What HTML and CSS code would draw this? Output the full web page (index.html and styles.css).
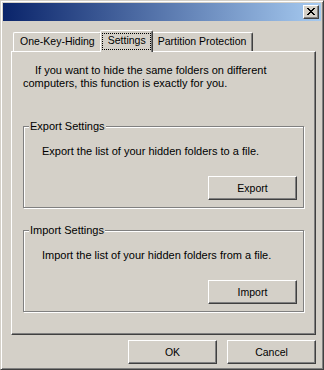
FILE: index.html
```html
<!DOCTYPE html>
<html>
<head>
    <title>Settings</title>
    <link rel="stylesheet" href="styles.css">
</head>
<body>
    <div class="window">
        <div class="titlebar">
            <button class="close-btn">
                <svg width="8" height="7" viewBox="0 0 8 7" shape-rendering="crispEdges">
                    <path d="M0 0h2v1H0zM6 0h2v1H6zM1 1h2v1H1zM5 1h2v1H5zM2 2h4v1H2zM3 3h2v1H3zM2 4h4v1H2zM1 5h2v1H1zM5 5h2v1H5zM0 6h2v1H0zM6 6h2v1H6z" fill="#000"/>
                </svg>
            </button>
        </div>

        <div class="body">
            <div class="tabs">
                <div class="tab">One-Key-Hiding</div>
                <div class="tab active"><span class="focus">Settings</span></div>
                <div class="tab">Partition Protection</div>
            </div>

            <div class="panel">
                <p class="intro">If you want to hide the same folders on different<br>computers, this function is exactly for you.</p>

                <div class="group">
                    <div class="group-title">Export Settings</div>
                    <p class="group-text">Export the list of your hidden folders to a file.</p>
                    <button class="btn group-btn">Export</button>
                </div>

                <div class="group">
                    <div class="group-title">Import Settings</div>
                    <p class="group-text">Import the list of your hidden folders from a file.</p>
                    <button class="btn group-btn">Import</button>
                </div>
            </div>

            <div class="footer">
                <button class="btn">OK</button>
                <button class="btn">Cancel</button>
            </div>
        </div>
    </div>
</body>
</html>
```

FILE: styles.css
```css
body {
    margin: 0;
    background-color: #d4d0c8;
    font-family: "Liberation Sans", Arial, sans-serif;
    font-size: 10.5px;
    color: #000;
}

.window {
    width: 324px;
    height: 370px;
    box-sizing: border-box;
    padding: 2px;
    border: 1px solid;
    border-color: #d4d0c8 #404040 #404040 #d4d0c8;
    box-shadow: inset 1px 1px #fff, inset -1px -1px #808080;
    background-color: #d4d0c8;
}

.titlebar {
    height: 18px;
    box-sizing: border-box;
    padding: 2px 2px 0 0;
    display: flex;
    justify-content: flex-end;
    align-items: flex-start;
    background: linear-gradient(to right, #0a246a, #a6caf0);
}

.close-btn {
    width: 16px;
    height: 14px;
    box-sizing: border-box;
    padding: 0;
    display: flex;
    align-items: flex-start;
    justify-content: flex-start;
    border: 1px solid;
    border-color: #fff #404040 #404040 #fff;
    box-shadow: inset -1px -1px #808080;
    background-color: #d4d0c8;
}

.close-btn svg {
    display: block;
    margin: 2px 0 0 3px;
}

.body {
    padding: 9px 5px 0 8px;
}

.tabs {
    display: flex;
    align-items: flex-end;
    height: 21px;
    padding-left: 2px;
}

.tab {
    height: 19px;
    box-sizing: border-box;
    padding: 0 6px;
    line-height: 17px;
    white-space: nowrap;
    border-top: 1px solid #fff;
    border-left: 1px solid #fff;
    border-right: 1px solid #404040;
    border-top-left-radius: 2px;
    border-top-right-radius: 2px;
    box-shadow: inset -1px 0 #808080;
    background-color: #d4d0c8;
}

.tab.active {
    height: 22px;
    margin: 0 -2px -1px;
    padding: 2px 1px 2px 1px;
    position: relative;
    z-index: 1;
}

.tab.active .focus {
    display: block;
    height: 100%;
    box-sizing: border-box;
    padding: 0 4px 0 5px;
    line-height: 13px;
    border: 1px dotted #000;
}

.panel {
    height: 284px;
    box-sizing: border-box;
    padding: 12px 11px 0 11px;
    border: 1px solid;
    border-color: #fff #404040 #404040 #fff;
    box-shadow: inset -1px -1px #808080;
    font-size: 11px;
}

.intro {
    margin: 0;
    line-height: 13px;
    text-indent: 12px;
}

.group {
    height: 82px;
    box-sizing: border-box;
    margin-top: 36px;
    padding: 0 6px 7px 18px;
    display: flex;
    flex-direction: column;
    border: 1px solid #808080;
    box-shadow: inset 1px 1px #fff, 1px 1px #fff;
}

.group + .group {
    margin-top: 22px;
}

.group-title {
    align-self: flex-start;
    margin: -7px 0 0 -13px;
    padding: 0 1px;
    line-height: 13px;
    background-color: #d4d0c8;
}

.group-text {
    margin: 12px 0 0;
    line-height: 13px;
}

.group-btn {
    margin-top: auto;
    align-self: flex-end;
}

.btn {
    width: 89px;
    height: 24px;
    box-sizing: border-box;
    padding: 0;
    font-family: inherit;
    font-size: 10.5px;
    color: #000;
    border: 1px solid;
    border-color: #fff #404040 #404040 #fff;
    box-shadow: inset -1px -1px #808080;
    background-color: #d4d0c8;
}

.footer {
    display: flex;
    justify-content: flex-end;
    gap: 10px;
    margin-top: 5px;
}
```
